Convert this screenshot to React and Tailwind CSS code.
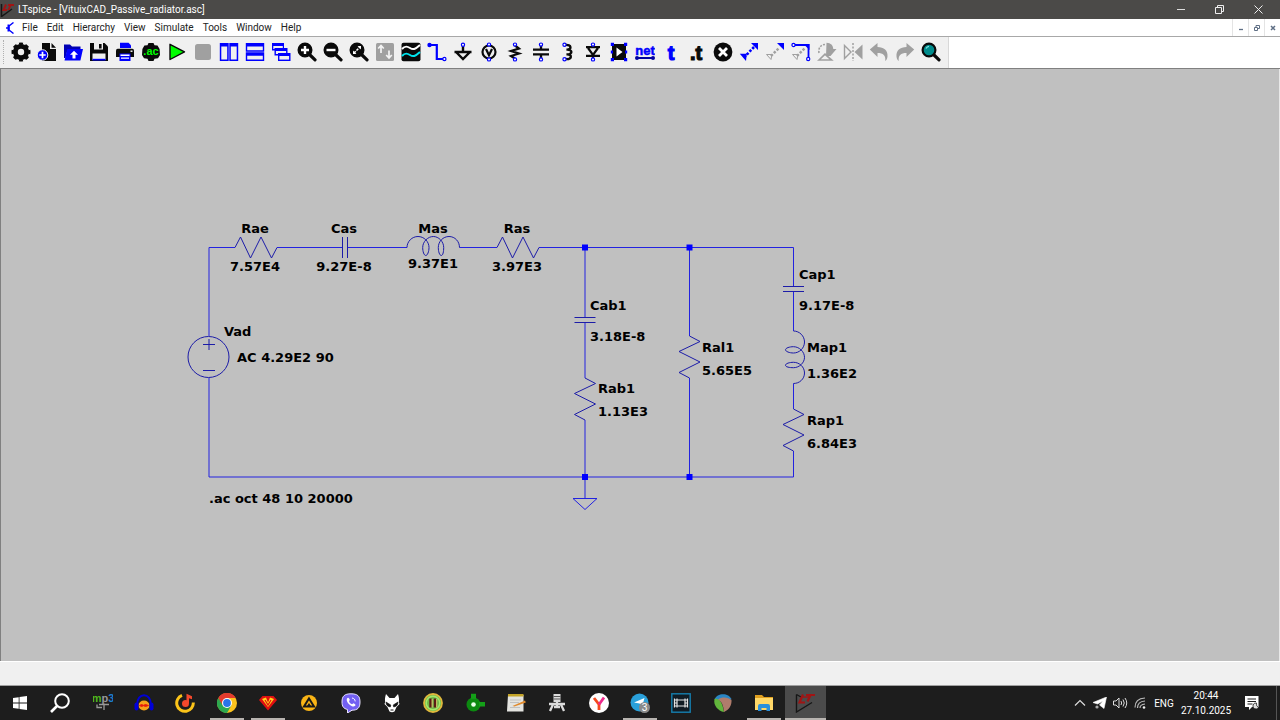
const UI_FONT = "font-['Roboto','Open_Sans',sans-serif]";

const MENU = ["File", "Edit", "Hierarchy", "View", "Simulate", "Tools", "Window", "Help"];

const BLUE = "#0000ff";
const DARK = "#0a0a0a";
const GREY = "#a0a0a0";

function Icon({ children }) {
  return (
    <svg width="20" height="20" viewBox="0 0 20 20" fill="none" className="shrink-0" aria-hidden="true">
      {children}
    </svg>
  );
}

// little open circle that marks a pin on the part icons
function Pin({ x, y }) {
  return <circle cx={x} cy={y} r="1.6" fill="#fff" stroke={BLUE} strokeWidth="1.2" />;
}

function Lens({ children, fill = DARK }) {
  return (
    <>
      <path d="M12.5 12.5L18 17.8" stroke={DARK} strokeWidth="3.2" strokeLinecap="round" />
      <circle cx="8" cy="8" r="6.4" fill={fill} stroke={DARK} strokeWidth="2.2" />
      {children}
    </>
  );
}

const TOOLS = [
  { name: "Settings", icon: (
    <>
      <circle cx="10" cy="10" r="5.6" stroke={DARK} strokeWidth="4.8" />
      <circle cx="10" cy="10" r="8.2" stroke={DARK} strokeWidth="2.6" pathLength="16" strokeDasharray="1.2 0.8" strokeDashoffset="0.6" />
    </>
  ) },
  { name: "New schematic", icon: (
    <>
      <path d="M5 1h8v6h6v12H5z" fill={DARK} />
      <path d="M14.5 1L19 5.7h-4.5z" fill={DARK} />
      <circle cx="5.5" cy="13" r="5.3" fill={BLUE} stroke="#f0f0f0" strokeWidth="1" />
      <path d="M5.5 9.8v6.4M2.3 13h6.4" stroke="#fff" strokeWidth="1.7" />
    </>
  ) },
  { name: "Open", icon: (
    <>
      <path d="M1 2.5h6l2 2h8.5V8h-13l-2 8H1z" fill="#0000b4" />
      <path d="M4.3 7H20l-2.6 11.5H1.5z" fill={BLUE} />
      <path d="M11 8.8l4 4h-2.5v3.7h-3v-3.7H7z" fill="#fff" />
    </>
  ) },
  { name: "Save", icon: (
    <>
      <path d="M1 1h14.5L19 4.5V19H1z" fill={DARK} />
      <path d="M5 1h9v6.5H5z" fill="#f0f0f0" />
      <path d="M10 2h2.6v4.5H10z" fill={DARK} />
      <path d="M3.5 11.5h13V18h-13z" fill="#f0f0f0" />
      <path d="M3.5 16.8h13v1.7h-13z" fill={BLUE} />
    </>
  ) },
  { name: "Print", icon: (
    <>
      <path d="M5 .8h8.5L16 3.2V6H5z" fill={BLUE} />
      <path d="M1 8.5Q1 6.8 2.7 6.8h14.6Q19 6.8 19 8.5V15H1z" fill={DARK} />
      <path d="M4.5 11.5h11V19h-11z" fill={BLUE} />
      <path d="M5.5 12.4h9v1.5h-9zM6 15.4h8v1.3H6z" fill="#fff" />
      <path d="M15.5 8.5h2v1.4h-2z" fill="#fff" />
    </>
  ) },
  { name: "Configure analysis", icon: (
    <>
      <path d="M7.5 1h5l1 2.2 3 .3L18.6 7 19 13l-2 3.3-3.5.4-1 2.3h-5l-1-2.3-3.500-.4L1 13l.4-6 2-3.500 3.100-.3z" fill={DARK} />
      <text x="10" y="13" textAnchor="middle" fontSize="11" fontWeight="700" fill="#00ff00" fontFamily="Liberation Sans, sans-serif">.ac</text>
    </>
  ) },
  { name: "Run", icon: <path d="M3 2.3v15.2L17.5 9.9z" fill="#00ff00" stroke={DARK} strokeWidth="1.4" strokeLinejoin="round" /> },
  { name: "Stop", icon: <rect x="2" y="2" width="16" height="16" rx="2.5" fill={GREY} /> },
  { name: "Tile vertically", icon: (
    <>
      <path d="M.8 1h8.900v18H.8zM10.3 1h8.900v18h-8.900z" fill={BLUE} />
      <path d="M2.3 4.5h5.900v13H2.3zM11.8 4.5h5.900v13h-5.900z" fill="#f0f0f0" />
    </>
  ) },
  { name: "Tile horizontally", icon: (
    <>
      <path d="M.8 1h18.4v8.7H.8zM.8 10.3h18.4V19H.8z" fill={BLUE} />
      <path d="M2.2 4.5h15.6v3.7H2.2zM2.2 13.8h15.6v3.7H2.2z" fill="#f0f0f0" />
    </>
  ) },
  { name: "Cascade", icon: (
    <>
      <path d="M1 1h12v7.5H1z" fill={BLUE} />
      <path d="M2.3 4h9.5v3H2.3z" fill="#f0f0f0" />
      <path d="M3.5 6h13v7.5h-13z" fill={BLUE} />
      <path d="M4.9 9h10.2v3H4.9z" fill="#f0f0f0" />
      <path d="M7 11h12.5v8H7z" fill={BLUE} />
      <path d="M8.4 14h9.7v3.6H8.4z" fill="#f0f0f0" />
    </>
  ) },
  { name: "Zoom in", icon: <Lens><path d="M8 4v8M4 8h8" stroke="#fff" strokeWidth="2.4" /></Lens> },
  { name: "Zoom out", icon: <Lens><path d="M3.5 8h9" stroke="#fff" strokeWidth="2.4" /></Lens> },
  { name: "Zoom to fit", icon: (
    <Lens>
      <path d="M8.5 4H12v3.5zM4 8.5V12h3.5z" fill="#fff" />
      <path d="M5 11l6-6" stroke="#fff" strokeWidth="1.6" strokeDasharray="2.5 1" />
    </Lens>
  ) },
  { name: "Autorange", icon: (
    <>
      <rect x="1" y="1" width="18" height="18" rx="1.5" fill={GREY} />
      <path d="M6 11V4M3.2 6.5L6 3.5l2.8 3M14 8.5v7M11.2 13l2.8 3 2.8-3" stroke="#f4f4f4" strokeWidth="1.7" />
    </>
  ) },
  { name: "Waveform", icon: (
    <>
      <rect x=".5" y=".8" width="19" height="18.4" rx="2" fill={DARK} />
      <path d="M1 7c3-3.5 5-3 8-1s5 1.5 10-3" stroke="#fff" strokeWidth="2" />
      <path d="M1 14c3-3.5 5-3 8-1s5 1.5 10-3" stroke="#00e5ee" strokeWidth="2" />
    </>
  ) },
  { name: "Wire", icon: (
    <>
      <path d="M2.5 3h7.3v14h7" stroke={BLUE} strokeWidth="2.2" />
      <circle cx="2.5" cy="3" r="2.2" fill={BLUE} />
      <Pin x={17.4} y={17} />
    </>
  ) },
  { name: "Ground", icon: (
    <>
      <path d="M10 3v7M1.5 10h17M3.5 10.5L10 17l6.5-6.5" stroke={DARK} strokeWidth="2.4" />
      <Pin x={10} y={2.8} />
    </>
  ) },
  { name: "Voltage source", icon: (
    <>
      <circle cx="10" cy="10" r="6.5" stroke={DARK} strokeWidth="2.2" />
      <path d="M7 7l3 6.3L13 7" stroke={DARK} strokeWidth="2.2" />
      <Pin x={10} y={2.6} />
      <Pin x={10} y={17.4} />
    </>
  ) },
  { name: "Resistor", icon: (
    <>
      <path d="M10 3.5l4 3L6 9l8 2.5L6 14l4 2.5" stroke={DARK} strokeWidth="2.2" />
      <Pin x={10} y={2.6} />
      <Pin x={10} y={17.4} />
    </>
  ) },
  { name: "Capacitor", icon: (
    <>
      <path d="M10 3v4.5M10 12.5V17M2 7.6h16M2 12.4h16" stroke={DARK} strokeWidth="2.3" />
      <Pin x={10} y={2.6} />
      <Pin x={10} y={17.4} />
    </>
  ) },
  { name: "Inductor", icon: (
    <>
      <path d="M8 3c7-1 7 5 1.5 4.6 6.5-.4 6.5 5.2 0 4.8 6.5-.4 5.5 5.6-1.5 4.6" stroke={DARK} strokeWidth="2.4" />
      <Pin x={7.5} y={2.8} />
      <Pin x={7.5} y={17.2} />
    </>
  ) },
  { name: "Diode", icon: (
    <>
      <path d="M3 5.2h14M3 13.8h14M5 6l5 6.8L15 6M10 13v4" stroke={DARK} strokeWidth="2.2" />
      <Pin x={10} y={2.6} />
      <Pin x={10} y={17.4} />
    </>
  ) },
  { name: "Component", icon: (
    <>
      <path d="M3 2h14v16H3z" fill={DARK} />
      <path d="M1.8.8H5V4H1.8zM15 .8h3.2V4H15zM1.8 8.4H4v3.2H1.8zM16 8.4h2.2v3.2H16zM1.8 16H5v3.2H1.8zM15 16h3.2v3.2H15z" fill={BLUE} />
      <path d="M7.5 5.5l6 4.5-6 4.5z" fill="#fff" />
    </>
  ) },
  { name: "Label net", icon: (
    <>
      <text x="10" y="12.5" textAnchor="middle" fontSize="13" fontWeight="700" fill={BLUE} stroke={BLUE} strokeWidth=".5" fontFamily="Liberation Sans, sans-serif">net</text>
      <path d="M2 16h16" stroke="#0000a0" strokeWidth="2" />
      <circle cx="2" cy="16" r="2" fill="#0000a0" />
      <circle cx="18" cy="16" r="2" fill="#0000a0" />
    </>
  ) },
  { name: "Text", icon: <text x="10" y="17.5" textAnchor="middle" fontSize="20" fontWeight="700" fill={BLUE} stroke={BLUE} strokeWidth="1.2" fontFamily="Liberation Sans, sans-serif">t</text> },
  { name: "SPICE directive", icon: <text x="9" y="17.5" textAnchor="middle" fontSize="20" fontWeight="700" fill={DARK} stroke={DARK} strokeWidth="1.2" fontFamily="Liberation Sans, sans-serif">.t</text> },
  { name: "Delete", icon: (
    <>
      <circle cx="10" cy="10" r="9.4" fill={DARK} />
      <path d="M6 6l8 8M14 6l-8 8" stroke="#fff" strokeWidth="2.8" />
    </>
  ) },
  { name: "Move", icon: (
    <>
      <path d="M5 15.5L15 5" stroke={BLUE} strokeWidth="2.6" strokeDasharray="2.5 1.5" />
      <path d="M12 1h7v7zM.8 11.8h7L7 19z" fill={BLUE} />
    </>
  ) },
  { name: "Copy", icon: (
    <>
      <path d="M6 14l8-8" stroke={GREY} strokeWidth="2.4" strokeDasharray="2.5 1.5" />
      <path d="M12 1h7v7z" fill={BLUE} />
      <path d="M1.5 12.5H7l-1 5z" stroke={GREY} strokeWidth="1" />
    </>
  ) },
  { name: "Stretch", icon: (
    <>
      <path d="M6 14l8-8" stroke={GREY} strokeWidth="2.4" strokeDasharray="2.5 1.5" />
      <path d="M1.5 12.5H7l-1 5z" stroke={GREY} strokeWidth="1" />
      <path d="M3 3h14.5v14" stroke={BLUE} strokeWidth="1.8" />
      <path d="M12.5 2h6v6z" fill={BLUE} />
      <Pin x={2.5} y={3} />
      <Pin x={17.2} y={17} />
    </>
  ) },
  { name: "Rotate", icon: (
    <>
      <path d="M2 11C1 5 5 2 9 2.5" stroke={GREY} strokeWidth="1.6" strokeDasharray="2 1.3" />
      <path d="M9.5.8C14 1 16 3.5 16.3 7h3.2l-6 7H9z" fill={GREY} />
      <path d="M2 18l6-5.8 6.5 5.8z" stroke={GREY} strokeWidth="1.7" />
    </>
  ) },
  { name: "Mirror", icon: (
    <>
      <path d="M10 1v18" stroke={GREY} strokeWidth="1.5" strokeDasharray="2 1.5" />
      <path d="M1.5 3.5L8 10l-6.5 6.5z" stroke={GREY} strokeWidth="1.4" />
      <path d="M19.5 2.5v15l-8-7.5z" fill={GREY} />
    </>
  ) },
  { name: "Undo", icon: <path d="M.8 7.5L8.5 1v4C15 5 19 8.5 18.5 14.5c-.2 2-1 3.5-2.3 4.5.8-5.5-2-8-7.700-8v4z" fill={GREY} /> },
  { name: "Redo", icon: <path d="M19.2 7.5L11.5 1v4C5 5 1 8.5 1.5 14.5c.2 2 1 3.5 2.3 4.5-.8-5.5 2-8 7.700-8v4z" fill={GREY} /> },
  { name: "Find", icon: <Lens fill="#008c8c"><path d="M5 6.5Q6 4.3 8 4.3" stroke="#7fe0e0" strokeWidth="1.3" /></Lens> },
];

// ---- schematic ----

function place(x, y, vertical) {
  return `translate(${x} ${y})${vertical ? " rotate(90)" : ""}`;
}

function Resistor({ x, y, vertical }) {
  return <path d="M0 0L5.5-10.5 15.5 10.5 26-10.5 36.5 10.5 42 0" transform={place(x, y, vertical)} />;
}

function Capacitor({ x, y, vertical }) {
  return <path d="M-2-10.5v21M3-10.5v21" transform={place(x, y, vertical)} />;
}

function Inductor({ x, y, vertical }) {
  return (
    <path
      d="M0 0C0-6 5-11 11-11S22-6 22 0C22 4 20.5 8 18.8 8C17 8 15.7 4 15.7 0C15.7-6 21-11 26.3-11S36.7-6 36.7 0C36.7 4 36 8 34.3 8C32.5 8 31.3 4 31.3 0C31.3-6 36-11 42-11S52.5-6 52.5 0"
      transform={place(x, y, vertical)}
    />
  );
}

const LABELS = [
  { x: 255, y: 233, text: "Rae", mid: true },
  { x: 255, y: 271, text: "7.57E4", mid: true },
  { x: 344, y: 233, text: "Cas", mid: true },
  { x: 344, y: 271, text: "9.27E-8", mid: true },
  { x: 433, y: 233, text: "Mas", mid: true },
  { x: 433, y: 268, text: "9.37E1", mid: true },
  { x: 517, y: 233, text: "Ras", mid: true },
  { x: 517, y: 271, text: "3.97E3", mid: true },
  { x: 224, y: 336, text: "Vad" },
  { x: 237, y: 362, text: "AC 4.29E2 90" },
  { x: 590, y: 310, text: "Cab1" },
  { x: 590, y: 341, text: "3.18E-8" },
  { x: 598, y: 393, text: "Rab1" },
  { x: 598, y: 416, text: "1.13E3" },
  { x: 702, y: 352, text: "Ral1" },
  { x: 702, y: 375, text: "5.65E5" },
  { x: 799, y: 279, text: "Cap1" },
  { x: 799, y: 310, text: "9.17E-8" },
  { x: 807, y: 352, text: "Map1" },
  { x: 807, y: 378, text: "1.36E2" },
  { x: 807, y: 425, text: "Rap1" },
  { x: 807, y: 448, text: "6.84E3" },
  { x: 209, y: 503, text: ".ac oct 48 10 20000" },
];

const JUNCTIONS = [[585, 247.5], [689.5, 247.5], [585, 477], [689.5, 477]];

function Schematic() {
  return (
    <svg width="900" height="460" viewBox="1 69 900 460" fill="none" className="block">
      <g stroke="#2222e0">
        <path d="M209 336V247.5H235M277 247.5H342M347 247.5H407M459.5 247.5H497M539 247.5H793.5V286.5" />
        <path d="M793.5 291.5V331M793.5 383.5V409M793.5 451V477H209V378" />
        <path d="M585 247.5V317.5M585 323V378M585 420V498.5M689.5 247.5V336M689.5 378V477" />
        <path d="M573 498.5H597L585 509.5Z" />
      </g>
      <g stroke="#1c1ca8">
        <Resistor x={235} y={247.5} />
        <Capacitor x={344.5} y={247.5} />
        <Inductor x={407} y={247.5} />
        <Resistor x={497} y={247.5} />
        <circle cx="208.5" cy="357" r="20.5" />
        <path d="M203 344.5H215M209 339V350M203 370.5H215" />
        <Capacitor x={585} y={319.5} vertical />
        <Resistor x={585} y={378} vertical />
        <Resistor x={689.5} y={336} vertical />
        <Capacitor x={793.5} y={288.5} vertical />
        <Inductor x={793.5} y={331} vertical />
        <Resistor x={793.5} y={409} vertical />
      </g>
      {JUNCTIONS.map(([x, y]) => (
        <rect key={`${x}-${y}`} x={x - 3} y={y - 3} width="6" height="6" fill={BLUE} />
      ))}
      <g className="fill-black font-['DejaVu_Sans',sans-serif] text-[13px] font-bold">
        {LABELS.map((l) => (
          <text key={l.text} x={l.x} y={l.y} textAnchor={l.mid ? "middle" : "start"}>{l.text}</text>
        ))}
      </g>
    </svg>
  );
}

// ---- taskbar ----

const APPS = [
  { name: "Mp3tag", icon: (
    <>
      <text x="10" y="9" textAnchor="middle" fontSize="11" fontWeight="700" fontFamily="Liberation Sans, sans-serif">
        <tspan fill="#4fb81c">m</tspan><tspan fill="#999">p</tspan><tspan fill="#1c7fd0">3</tspan>
      </text>
      <path d="M11 10.5V17M6 11.5h10M9 14.5H4v-3" stroke="#999" strokeWidth="1.3" />
    </>
  ) },
  { name: "Audacity", icon: (
    <>
      <ellipse cx="10" cy="12.5" rx="5.5" ry="5" fill="#f6a21a" />
      <path d="M5.5 12.5l2-1 2 .8 2-.8 3 1-3 1-2-.8-2 .8z" fill="#e81c0c" stroke="#e81c0c" />
      <path d="M3 12C3-1 17-1 17 12" stroke="#0000d8" strokeWidth="2" />
      <rect x=".5" y="9.5" width="4" height="8" rx="2" fill="#0000d8" />
      <rect x="15.5" y="9.5" width="4" height="8" rx="2" fill="#0000d8" />
    </>
  ) },
  { name: "Music", icon: (
    <>
      <path d="M7 2.3A8.3 8.3 0 1 0 18.3 9.5" stroke="#fcc419" strokeWidth="3" />
      <circle cx="10.5" cy="10.5" r="3.5" fill="#f4482c" />
      <path d="M11.5 10V.8L17 3.3v3l-3-1.100V10z" fill="#f4482c" />
    </>
  ) },
  { name: "Chrome", running: true, icon: (
    <>
      <circle cx="10" cy="10" r="10" fill="#fcc31e" />
      <path d="M10 10L1.3 5A10 10 0 0 0 10 20l4.4-7.5z" fill="#2da94f" />
      <path d="M1.3 5A10 10 0 0 1 18.7 5H10l-4.3 7.5z" fill="#e33b2e" />
      <circle cx="10" cy="10" r="5" fill="#fff" />
      <circle cx="10" cy="10" r="3.9" fill="#2a74e8" />
    </>
  ) },
  { name: "Red diamond", running: true, icon: (
    <>
      <path d="M4.5 3h11L19 7l-9 10.5L1 7z" fill="#e01010" />
      <path d="M4 6l4-1.5 2 5 2-5L16 6l-6 8z" fill="#ffd51c" />
      <path d="M8.5 4h3L10 8z" fill="#e01010" />
      <path d="M7 7l3 5 3-5" stroke="#e01010" strokeWidth="1.2" />
    </>
  ) },
  { name: "AIMP", icon: (
    <>
      <circle cx="10" cy="10" r="8" fill="#f9b416" />
      <path d="M10 5.5l5 8H5z" stroke="#191919" strokeWidth="2" />
      <path d="M10 10l2 3H8z" fill="#191919" />
    </>
  ) },
  { name: "Viber", icon: (
    <>
      <path d="M10 .8c6.5 0 9 2.2 9 8.2s-2.5 8.2-8 8.2L6.5 20v-3.5C2.5 15.5 1 13.5 1 9 1 3 3.5.8 10 .8z" fill="#7360f2" stroke="#e8e4ff" strokeWidth="1" />
      <path d="M6 5.5c1-1.2 1.7-.7 2.7 1 .4.9-.7 1.4-.6 2 .5 1.5 1.5 2.3 2.9 2.7.7 0 1-1.3 2-.8 2 1.2 1.8 1.8.8 2.6-1.2 1-2.8.3-4.5-.8C7 10.7 5 7.5 6 5.5z" fill="#fff" />
      <path d="M11 5c2 .3 3 1.3 3.2 3.4" stroke="#fff" strokeWidth="1" />
    </>
  ) },
  { name: "foobar2000", icon: (
    <>
      <path d="M4 1l3.5 4h5L16 1c1 3 1.3 5.5.8 8l.7 2-3 3-2 4.5q-2.5 1.5-5 0l-2-4.500-3-3 .7-2C2.7 6.5 3 4 4 1z" fill="#fff" />
      <path d="M4 9l4.8 3-.5 2C5.5 13.5 4 12 4 9zM16 9l-4.8 3 .5 2c2.8-.5 4.3-2 4.3-5z" fill="#111" stroke="#111" strokeWidth=".6" />
      <path d="M8.5 17h3" stroke="#111" strokeWidth="1" />
    </>
  ) },
  { name: "Audio converter", icon: (
    <>
      <circle cx="10" cy="10" r="9" fill="#72b84a" stroke="#e0b83c" strokeWidth="1.8" />
      <circle cx="10" cy="10" r="6.8" stroke="#a4e86a" strokeWidth="1.5" />
      <path d="M7.5 5.5v9M12 5.5v9" stroke="#5c1c14" strokeWidth="2.4" />
      <path d="M9.2 6v8.5M13.7 6v8.5" stroke="#d8c06c" strokeWidth="1" />
    </>
  ) },
  { name: "Plugin host", icon: (
    <>
      <circle cx="8.5" cy="11.5" r="7" fill="#0c8a10" />
      <path d="M6 .8h5v5H6zM14 9h6v4.5h-6z" fill="#14a018" />
      <circle cx="8.5" cy="11.5" r="2.3" fill="#e8ffe8" />
    </>
  ) },
  { name: "Notepad", icon: (
    <>
      <path d="M2 2h15.5v16.5H1z" fill="#e4e4e0" />
      <path d="M2 1h15.5v2.5H2z" fill="#c4a428" />
      <path d="M4 7h11M4 9.5h9M4 14.5h10" stroke="#b8b8b8" strokeWidth=".8" />
      <path d="M6.5 13L19 7.5l.8 2-11.300 4z" fill="#e08a2c" />
    </>
  ) },
  { name: "Microphone", icon: (
    <>
      <path d="M6.5 1h7v8h-7z" fill="#dcdcdc" />
      <path d="M6.5 3.5h7M6.5 6h7" stroke="#555" strokeWidth="1" />
      <path d="M2 11h16M10 9v5M6 11.5L3 18M14 11.5l3 6.5M7 14h6" stroke="#dcdcdc" strokeWidth="2.3" />
    </>
  ) },
  { name: "Yandex", icon: (
    <>
      <circle cx="10" cy="10" r="10" fill="#fff" />
      <path d="M10 17v-5.5L5 5" stroke="#f6491f" strokeWidth="2.8" />
      <path d="M10 11.5l5-7" stroke="#ee2a8c" strokeWidth="2.8" />
    </>
  ) },
  { name: "Telegram", running: true, icon: (
    <>
      <circle cx="9.5" cy="9.5" r="9" fill="#2aa0da" />
      <path d="M4 9.5L14.5 5l-2 7-3-1.5z" fill="#fff" />
      <circle cx="14.5" cy="14.5" r="5.5" fill="#8a8a8a" />
      <text x="14.5" y="18" textAnchor="middle" fontSize="10" fill="#fff" fontFamily="Liberation Sans, sans-serif">3</text>
    </>
  ) },
  { name: "Movies", icon: (
    <>
      <rect x=".8" y=".8" width="18.4" height="18.4" fill="#111c24" stroke="#167fae" strokeWidth="1.4" />
      <path d="M3.5 5.5v9M6 5.5v9M14 5.5v9M16.5 5.5v9" stroke="#e4e4e4" strokeWidth="1.2" />
      <path d="M3.5 7H6M3.5 10H6M3.5 13H6M14 7h2.500M14 10h2.500M14 13h2.500M6 7h8M6 13h8" stroke="#e4e4e4" strokeWidth="1" />
    </>
  ) },
  { name: "REAPER", icon: (
    <>
      <path d="M1.5 6.5C4-.5 16-.5 18.5 6.5L10 8z" fill="#2a86c4" />
      <path d="M1.5 6C6 5 9 8 11 19 5 18 0 12 1.5 6z" fill="#62b63c" />
      <path d="M5 6.5C9 3.5 15 4 18.5 7c.5 5-2.5 10-7.500 12C10.500 13 9 8.5 5 6.5z" fill="#b07c6c" />
    </>
  ) },
  { name: "Explorer", running: true, icon: (
    <>
      <path d="M1 2h7l2 2h9v4H1z" fill="#e0a020" />
      <path d="M1 5h18v12H1z" fill="#ffd868" />
      <path d="M4 18v-5q0-2 2-2h8q2 0 2 2v5h-3.5v-3h-5v3z" fill="#2a90dc" />
    </>
  ) },
  { name: "LTspice", active: true, icon: (
    <>
      <path d="M1.5 1.5V19L17 9.5" stroke="#161616" strokeWidth="1.4" />
      <path d="M1.5 1.5L6 4" stroke="#161616" strokeWidth="1.4" />
      <path d="M8 1.5l-3.5 8H10M12.5 8.5l3-6.5M11 2h9" stroke="#a01414" strokeWidth="2.2" />
      <path d="M8 4h6" stroke="#a01414" strokeWidth="1.5" />
    </>
  ) },
];

function Taskbar() {
  return (
    <footer className="flex h-[34px] items-stretch bg-[#1d1d1d] text-white">
      <button aria-label="Start" className="flex w-10 items-center justify-center">
        <svg width="14" height="14" viewBox="0 0 14 14" fill="#fff">
          <path d="M0 2l5.7-.8v5.4H0zM6.5 1L14 0v6.6H6.5zM0 7.4h5.700v5.400L0 12zM6.5 7.4H14V14l-7.500-1z" />
        </svg>
      </button>
      <button aria-label="Search" className="flex w-10 items-center justify-center">
        <svg width="20" height="20" viewBox="0 0 20 20" fill="none" stroke="#fff" strokeWidth="2">
          <circle cx="12" cy="8" r="6.8" />
          <path d="M7 13l-6 6" strokeWidth="2.6" />
        </svg>
      </button>
      <div className="ml-0.5 flex w-[744px]">
        {APPS.map((app) => (
          <button
            key={app.name}
            aria-label={app.name}
            className={`flex flex-1 flex-col items-center pt-0.5 ${app.active ? "bg-[#4b4b4b]" : ""}`}
          >
            <span className="flex flex-1 items-center">
              <Icon>{app.icon}</Icon>
            </span>
            <span className={`h-0.5 ${app.active ? "w-full bg-[#b8b4b0]" : app.running ? "w-[34px] bg-[#b8b4b0]" : "w-0"}`} />
          </button>
        ))}
      </div>
      <div className="ml-auto flex items-center text-[10px]">
        <button aria-label="Show hidden icons" className="flex w-5 justify-center">
          <svg width="12" height="8" viewBox="0 0 12 8" fill="none" stroke="#ddd" strokeWidth="1.2">
            <path d="M1 6.5l5-5 5 5" />
          </svg>
        </button>
        <button aria-label="Telegram messages" className="flex w-5 justify-center">
          <svg width="14" height="12" viewBox="0 0 14 12">
            <path d="M0 5.5L13.5 0 11 11.5 6.5 8 10 4 4.5 7z" fill="#fff" stroke="#fff" strokeWidth=".6" />
            <circle cx="4" cy="10" r="1.6" fill="#aaa" />
          </svg>
        </button>
        <button aria-label="Volume" className="flex w-5 justify-center">
          <svg width="15" height="12" viewBox="0 0 15 12" fill="none" stroke="#ddd" strokeWidth="1">
            <path d="M.5 4H3l3-3v10L3 8H.5zM8 4q1.3 2 0 4M10 2.5q2.5 3.5 0 7M12 1q3.5 5 0 10" />
          </svg>
        </button>
        <button aria-label="Network" className="flex w-5 justify-center">
          <svg width="12" height="12" viewBox="0 0 12 12" fill="none" stroke="#bbb" strokeWidth="1.2">
            <path d="M1 10.5Q1 1.5 11 1M3.5 11Q3.5 4.5 11 4M6 11q0-3.5 5-4" />
            <circle cx="10" cy="10.5" r="1.3" fill="#eee" stroke="none" />
          </svg>
        </button>
        <button className="w-7 text-center">ENG</button>
        <button className="w-14 text-center leading-[15px]">
          <time className="block">20:44</time>
          <time className="block">27.10.2025</time>
        </button>
        <button aria-label="Notifications" className="flex w-9 justify-center">
          <svg width="14" height="14" viewBox="0 0 14 14" fill="none">
            <path d="M0 0h13.5v11H7l-3 3v-3H0z" fill="#fff" />
            <path d="M2.5 3H11M2.5 5.5H11M2.5 8h5" stroke="#1d1d1d" strokeWidth="1" />
            <path d="M11.5 7a3 3 0 1 0 2 4.5q-2.5-1-2-4.5z" fill="#ddd" stroke="#1d1d1d" strokeWidth=".8" />
          </svg>
        </button>
        <span className="ml-1.5 h-full w-1 border-l border-[#555]" />
      </div>
    </footer>
  );
}

export default function App() {
  return (
    <div className={`flex min-h-screen flex-col bg-[#f0f0f0] ${UI_FONT}`}>
      <header className="flex h-[19px] items-center bg-[#4b4a48] pr-0.5 text-[10px] text-white">
        <svg width="14" height="14" viewBox="0 0 14 14" fill="none" className="mr-1">
          <path d="M1.5 1v12.5L12 6" stroke="#161616" strokeWidth="1.5" />
          <path d="M6 1.5L3.5 7H7M10.5 2l-2 5M8 2h6" stroke="#a01414" strokeWidth="2" />
        </svg>
        <h1 className="whitespace-nowrap">LTspice - [VituixCAD_Passive_radiator.asc]</h1>
        <div className="ml-auto flex">
          <button aria-label="Minimize" className="flex w-[39px] justify-center">
            <svg width="8" height="8" viewBox="0 0 8 8"><path d="M0 4h8v1H0z" fill="#ddd" /></svg>
          </button>
          <button aria-label="Restore" className="flex w-[39px] justify-center">
            <svg width="9" height="9" viewBox="0 0 9 9" fill="none" stroke="#eee">
              <path d="M.5 2.5h6v6h-6zM2.5 2V.5h6v6H7" />
            </svg>
          </button>
          <button aria-label="Close" className="flex w-[39px] justify-center">
            <svg width="9" height="9" viewBox="0 0 9 9" stroke="#eee"><path d="M.5.5l8 8M8.5.5l-8 8" /></svg>
          </button>
        </div>
      </header>

      <nav className="flex h-[18px] items-center border-b border-[#a8a8a8] bg-white text-[10px] text-[#222]">
        <svg width="12" height="12" viewBox="0 0 12 12" fill="none" stroke={BLUE} strokeWidth="1.4" className="mr-1.5 ml-1">
          <path d="M9.5.5L5 4v4l4.5 3.5M2 6h3" />
          <path d="M4.5 2.5v7" strokeWidth="2" />
        </svg>
        <ul className="flex gap-[9px]">
          {MENU.map((item) => (
            <li key={item}><button className="block leading-4">{item}</button></li>
          ))}
        </ul>
        <div className="ml-auto flex h-full text-[#5f6f85]">
          <button aria-label="Minimize document" className="flex w-4 items-center justify-center border-l border-[#e4e4e4]">
            <svg width="6" height="6" viewBox="0 0 6 6" stroke="currentColor"><path d="M1 4.5h4" strokeWidth="1.3" /></svg>
          </button>
          <button aria-label="Restore document" className="flex w-4 items-center justify-center border-l border-[#e4e4e4]">
            <svg width="6" height="6" viewBox="0 0 6 6" fill="none" stroke="currentColor"><path d="M.5 2.5h3v3h-3zM2 2V.5h3.5v3H4" /></svg>
          </button>
          <button aria-label="Close document" className="flex w-4 items-center justify-center border-l border-[#e4e4e4]">
            <svg width="6" height="6" viewBox="0 0 6 6" stroke="currentColor"><path d="M1 1l4 4M5 1L1 5" strokeWidth="1.5" /></svg>
          </button>
        </div>
      </nav>

      <div className="flex h-8 border-b border-[#808080] bg-white">
        <div role="toolbar" aria-label="Schematic tools" className="flex items-start border-r border-[#d8d8d8] bg-[#f0f0f0] pt-px pr-1">
          <span className="mt-0.5 mr-1 ml-[3px] h-6 w-px border-l border-dotted border-[#b0b0b0]" />
          {TOOLS.map((tool) => (
            <button key={tool.name} aria-label={tool.name} title={tool.name} className="flex h-7 w-[26px] items-center justify-center">
              <Icon>{tool.icon}</Icon>
            </button>
          ))}
        </div>
      </div>

      <main className="flex-1 overflow-hidden border-r border-l border-r-[#e8e8e8] border-l-[#808080] bg-[#c0c0c0]">
        <Schematic />
      </main>

      <div role="status" className="h-[25px] border-t border-b border-t-white border-b-[#a0a0a0] bg-[#f0f0f0]" />

      <Taskbar />
    </div>
  );
}
